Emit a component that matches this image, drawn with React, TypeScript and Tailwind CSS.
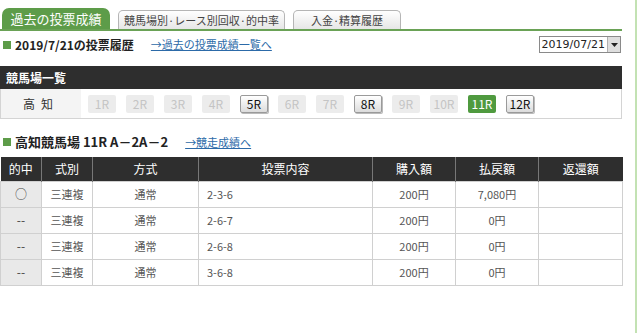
import React from "react";

const races = [
  { n: "1R", on: false },
  { n: "2R", on: false },
  { n: "3R", on: false },
  { n: "4R", on: false },
  { n: "5R", on: true },
  { n: "6R", on: false },
  { n: "7R", on: false },
  { n: "8R", on: true },
  { n: "9R", on: false },
  { n: "10R", on: false },
  { n: "11R", on: true, cur: true },
  { n: "12R", on: true },
];

const bets = [
  { hit: "○", shiki: "三連複", hoshiki: "通常", naiyo: "2-3-6", kounyu: "200円", harai: "7,080円" },
  { hit: "--", shiki: "三連複", hoshiki: "通常", naiyo: "2-6-7", kounyu: "200円", harai: "0円" },
  { hit: "--", shiki: "三連複", hoshiki: "通常", naiyo: "2-6-8", kounyu: "200円", harai: "0円" },
  { hit: "--", shiki: "三連複", hoshiki: "通常", naiyo: "3-6-8", kounyu: "200円", harai: "0円" },
];

const font = { fontFamily: '"Noto Sans CJK JP", "Noto Sans", sans-serif' };

function RaceButton({ n, on, cur }: { n: string; on: boolean; cur?: boolean }) {
  if (cur) {
    return (
      <div className="w-[28px] h-[18px] rounded-[2px] bg-[#4f9a3f] text-white text-[12px] leading-[18px] text-center">
        {n}
      </div>
    );
  }
  if (on) {
    return (
      <div className="w-[28px] h-[18px] rounded-[2px] border border-[#9a9a9a] bg-gradient-to-b from-white to-[#dcdcdc] text-[#111] text-[12px] leading-[16px] text-center shadow-[1px_1px_0_#bbb]">
        {n}
      </div>
    );
  }
  return (
    <div className="w-[28px] h-[18px] rounded-[2px] bg-[#ececec] text-[#c4c4c4] text-[12px] leading-[18px] text-center">
      {n}
    </div>
  );
}

export default function App() {
  return (
    <div className="w-[640px] h-[333px] bg-white flex overflow-hidden text-[#333]" style={font}>
      <div className="w-[622px] flex flex-col">
        {/* tabs */}
        <div className="flex items-end gap-[8px] pt-[9px] pl-[2px] border-b-2 border-[#6aa256] h-[31px]">
          <div className="w-[108px] h-[21px] rounded-t-[7px] bg-[#5d9c49] text-white text-[13px] leading-[21px] text-center">
            過去の投票成績
          </div>
          <div className="w-[167px] h-[19px] rounded-t-[5px] border border-b-0 border-[#b5b5b5] bg-gradient-to-b from-white to-[#e6e6e6] text-[#444] text-[11px] leading-[18px] text-center">
            競馬場別·レース別回収·的中率
          </div>
          <div className="w-[108px] h-[19px] rounded-t-[5px] border border-b-0 border-[#b5b5b5] bg-gradient-to-b from-white to-[#e6e6e6] text-[#444] text-[11px] leading-[18px] text-center">
            入金·精算履歴
          </div>
        </div>

        {/* date heading */}
        <div className="flex items-center h-[27px]">
          <div className="w-[8px] h-[8px] bg-[#5d9c49] ml-[3px] mr-[4px]" />
          <span className="text-[12px] font-bold text-[#222]">2019/7/21の投票履歴</span>
          <a className="ml-[17px] text-[11px] text-[#2c6aa8] underline">→過去の投票成績一覧へ</a>
          <div className="ml-auto mr-[1px] flex items-center h-[17px] border border-[#8a8a8a] bg-white">
            <span className="px-[2px] text-[#222] leading-[15px]" style={{ fontFamily: '"DejaVu Sans", sans-serif', fontSize: 11 }}>
              2019/07/21
            </span>
            <div className="w-[13px] h-[15px] bg-[#dedede] border-l border-[#b0b0b0] flex items-center justify-center">
              <svg width="7" height="4" viewBox="0 0 7 4">
                <path d="M0 0 L7 0 L3.5 4 Z" fill="#222" />
              </svg>
            </div>
          </div>
        </div>

        {/* course list */}
        <div className="h-[23px] bg-[#2e2e2e] text-white text-[12px] font-bold leading-[23px] pl-[6px] mt-[8px]">
          競馬場一覧
        </div>
        <div className="flex items-center h-[30px] border-b border-[#d4d4d4] border-l border-r">
          <div className="w-[80px] h-full bg-[#f4f4f4] flex items-center justify-center text-[12px] text-[#333] tracking-[6px]">
            高知
          </div>
          <div className="flex gap-[10px] ml-[7px]">
            {races.map((r) => (
              <RaceButton key={r.n} n={r.n} on={r.on} cur={r.cur} />
            ))}
          </div>
        </div>

        {/* race heading */}
        <div className="flex items-center h-[22px] mt-[12px]">
          <div className="w-[8px] h-[8px] bg-[#5d9c49] ml-[3px] mr-[4px]" />
          <span className="text-[13px] font-bold text-[#222]">高知競馬場 11R A－2A－2</span>
          <a className="ml-[17px] text-[11px] text-[#2c6aa8] underline">→競走成績へ</a>
        </div>

        {/* bets table */}
        <table className="mt-[4px] w-[622px] border-collapse text-[11px] table-fixed">
          <colgroup>
            <col className="w-[41px]" />
            <col className="w-[51px]" />
            <col className="w-[106px]" />
            <col className="w-[174px]" />
            <col className="w-[83px]" />
            <col className="w-[83px]" />
            <col className="w-[84px]" />
          </colgroup>
          <thead>
            <tr className="h-[24px] bg-[#2e2e2e] text-white text-[12px]">
              <th className="font-normal border-r border-[#777]">的中</th>
              <th className="font-normal border-r border-[#777]">式別</th>
              <th className="font-normal border-r border-[#777]">方式</th>
              <th className="font-normal border-r border-[#777]">投票内容</th>
              <th className="font-normal border-r border-[#777]">購入額</th>
              <th className="font-normal border-r border-[#777]">払戻額</th>
              <th className="font-normal">返還額</th>
            </tr>
          </thead>
          <tbody>
            {bets.map((b, i) => (
              <tr key={i} className="h-[26px] text-[#555]">
                <td className="bg-[#e9e9e9] text-center border border-[#d0d0d0] text-[#444] text-[12px]">{b.hit}</td>
                <td className="text-center border border-[#d0d0d0]">{b.shiki}</td>
                <td className="text-center border border-[#d0d0d0]">{b.hoshiki}</td>
                <td className="pl-[8px] border border-[#d0d0d0]">{b.naiyo}</td>
                <td className="text-center border border-[#d0d0d0]">{b.kounyu}</td>
                <td className="text-center border border-[#d0d0d0]">{b.harai}</td>
                <td className="border border-[#d0d0d0]"></td>
              </tr>
            ))}
          </tbody>
        </table>
      </div>
      <div className="w-[13px]" />
      <div className="w-[2px] h-full bg-[#c3e2b3]" />
    </div>
  );
}
